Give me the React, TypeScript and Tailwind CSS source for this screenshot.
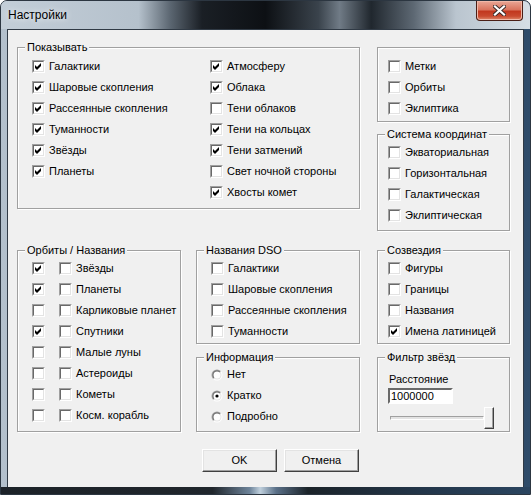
import type { ReactNode } from "react";

type Item = readonly [string, boolean];

const showLeft: Item[] = [
  ["Галактики", true],
  ["Шаровые скопления", true],
  ["Рассеянные скопления", true],
  ["Туманности", true],
  ["Звёзды", true],
  ["Планеты", true]
];

const showRight: Item[] = [
  ["Атмосферу", true],
  ["Облака", true],
  ["Тени облаков", false],
  ["Тени на кольцах", true],
  ["Тени затмений", true],
  ["Свет ночной стороны", false],
  ["Хвосты комет", true]
];

const orbits: Item[] = [
  ["Звёзды", true],
  ["Планеты", true],
  ["Карликовые планет", false],
  ["Спутники", true],
  ["Малые луны", false],
  ["Астероиды", false],
  ["Кометы", false],
  ["Косм. корабль", false]
];

function Box({ checked }: { checked: boolean }) {
  return (
    <span className="block h-[13px] w-[13px] shrink-0 border border-t-[#a0a0a0] border-l-[#a0a0a0] border-b-white border-r-white">
      <span className="block h-full w-full border border-t-[#696969] border-l-[#696969] border-b-[#e3e3e3] border-r-[#e3e3e3] bg-white">
        {checked && (
          <svg width="9" height="9" viewBox="0 0 9 9" className="block">
            <polygon points="1,3 3,5 7,1 7,4 3,8 1,6" fill="#000" />
          </svg>
        )}
      </span>
    </span>
  );
}

function Radio({ checked }: { checked: boolean }) {
  return (
    <svg width="12" height="12" viewBox="0 0 12 12" className="block shrink-0">
      <defs>
        <linearGradient id="ro" x1="0" y1="0" x2="1" y2="1">
          <stop offset="0.45" stopColor="#a0a0a0" />
          <stop offset="0.55" stopColor="#ffffff" />
        </linearGradient>
        <linearGradient id="ri" x1="0" y1="0" x2="1" y2="1">
          <stop offset="0.45" stopColor="#696969" />
          <stop offset="0.55" stopColor="#e3e3e3" />
        </linearGradient>
      </defs>
      <circle cx="6" cy="6" r="5.5" fill="url(#ro)" />
      <circle cx="6" cy="6" r="4.5" fill="url(#ri)" />
      <circle cx="6" cy="6" r="3.5" fill="#fff" />
      {checked && <circle cx="6" cy="6" r="1.6" fill="#000" />}
    </svg>
  );
}

function Check({ label, checked }: { label: string; checked: boolean }) {
  return (
    <div className="flex h-[21px] items-center gap-[4px] whitespace-nowrap">
      <Box checked={checked} />
      <span>{label}</span>
    </div>
  );
}

function Group({ title, className, children }: { title?: string; className: string; children: ReactNode }) {
  return (
    <div className={`relative shrink-0 border border-[#a0a0a0] shadow-[inset_1px_1px_0_#fff,1px_1px_0_#fff] ${className}`}>
      {title && (
        <span className="absolute -top-[7px] left-[7px] bg-[#f0f0f0] px-[2px] leading-[13px] whitespace-nowrap">{title}</span>
      )}
      {children}
    </div>
  );
}

function Button({ children }: { children: ReactNode }) {
  return (
    <button className="flex h-[23px] w-[75px] items-center justify-center border border-t-white border-l-white border-b-[#404040] border-r-[#404040] bg-[#f0f0f0] shadow-[inset_-1px_-1px_0_#a0a0a0,inset_1px_1px_0_#e3e3e3]">
      {children}
    </button>
  );
}

export default function App() {
  return (
    <div className="relative h-[495px] w-[531px] overflow-hidden rounded-t-[7px] border border-[#2c3641] bg-[linear-gradient(90deg,#b3c0cc_0%,#9fb0c0_30%,#2a3a4c_60%,#2f4c6a_100%)] font-['Liberation_Sans',Arial,sans-serif] text-[11px] text-black">
      <div className="flex h-[28px] items-start justify-between bg-[linear-gradient(90deg,#c3ced8_0%,#b5c1cc_26%,#5b6671_32%,#1a1f25_38%,#0d1014_50%,#3a434c_60%,#707b86_64%,#20272e_70%,#5d6873_78%,#bac5cf_86%,#d6dee5_100%)]">
        <span className="pl-[7px] pt-[6px] text-[12px] leading-[16px] [text-shadow:0_0_6px_#ffffff]">Настройки</span>
        <div className="mr-[7px] flex h-[20px] w-[47px] items-center justify-center rounded-b-[4px] border border-t-0 border-[#4a1e16] bg-[linear-gradient(180deg,#e9a796_0%,#d9755f_45%,#c2381f_55%,#c94a2f_80%,#e08a6c_100%)] shadow-[inset_0_0_0_1px_#f0b8a8]">
          <svg width="13" height="11" viewBox="0 0 13 11">
            <path d="M2 1.5 L11 9.5 M11 1.5 L2 9.5" stroke="#3a2a28" strokeWidth="4" strokeLinecap="square" />
            <path d="M2 1.5 L11 9.5 M11 1.5 L2 9.5" stroke="#ffffff" strokeWidth="2.2" strokeLinecap="square" />
          </svg>
        </div>
      </div>

      <div className="mx-[6px] h-[459px] border border-[#303a45] bg-[#f0f0f0] pl-[9px] pt-[17px]">
        <div className="flex">
          <Group title="Показывать" className="h-[162px] w-[343px] pl-[14px] pt-[8px]">
            <div className="flex">
              <div className="w-[178px]">
                {showLeft.map(([l, c]) => (
                  <Check key={l} label={l} checked={c} />
                ))}
              </div>
              <div>
                {showRight.map(([l, c]) => (
                  <Check key={l} label={l} checked={c} />
                ))}
              </div>
            </div>
          </Group>
          <div className="ml-[17px] flex flex-col">
            <Group className="h-[75px] w-[133px] pl-[10px] pt-[8px]">
              <Check label="Метки" checked={false} />
              <Check label="Орбиты" checked={false} />
              <Check label="Эклиптика" checked={false} />
            </Group>
            <Group title="Система координат" className="mt-[12px] h-[97px] w-[133px] pl-[10px] pt-[7px]">
              <Check label="Экваториальная" checked={false} />
              <Check label="Горизонтальная" checked={false} />
              <Check label="Галактическая" checked={false} />
              <Check label="Эклиптическая" checked={false} />
            </Group>
          </div>
        </div>

        <div className="mt-[19px] flex">
          <Group title="Орбиты / Названия" className="h-[182px] w-[164px] pl-[14px] pt-[7px]">
            {orbits.map(([l, c]) => (
              <div key={l} className="flex h-[21px] items-center whitespace-nowrap">
                <Box checked={c} />
                <span className="ml-[14px]">
                  <Box checked={false} />
                </span>
                <span className="ml-[4px]">{l}</span>
              </div>
            ))}
          </Group>
          <div className="ml-[15px] flex flex-col">
            <Group title="Названия DSO" className="h-[94px] w-[164px] pl-[14px] pt-[7px]">
              <Check label="Галактики" checked={false} />
              <Check label="Шаровые скопления" checked={false} />
              <Check label="Рассеянные скопления" checked={false} />
              <Check label="Туманности" checked={false} />
            </Group>
            <Group title="Информация" className="mt-[13px] h-[75px] w-[164px] pl-[14px] pt-[6px]">
              {[["Нет", false], ["Кратко", true], ["Подробно", false]].map(([l, c]) => (
                <div key={l as string} className="flex h-[21px] items-center gap-[4px]">
                  <Radio checked={c as boolean} />
                  <span>{l as string}</span>
                </div>
              ))}
            </Group>
          </div>
          <div className="ml-[17px] flex flex-col">
            <Group title="Созвездия" className="h-[94px] w-[133px] pl-[10px] pt-[7px]">
              <Check label="Фигуры" checked={false} />
              <Check label="Границы" checked={false} />
              <Check label="Названия" checked={false} />
              <Check label="Имена латиницей" checked={true} />
            </Group>
            <Group title="Фильтр звёзд" className="mt-[13px] h-[75px] w-[133px] pl-[11px] pt-[15px]">
              <div className="leading-[13px]">Расстояние</div>
              <div className="ml-[-1px] mt-[2px] flex h-[16px] w-[65px] items-center border-2 border-t-[#696969] border-l-[#696969] border-b-white border-r-white bg-white pl-[1px] leading-[12px]">
                1000000
              </div>
              <div className="mt-[3px] flex h-[22px] items-center pl-[1px]">
                <div className="h-[4px] w-[94px] border border-t-[#a0a0a0] border-l-[#a0a0a0] border-b-white border-r-white bg-[#e3e3e3]" />
                <div className="h-[22px] w-[10px] border border-t-white border-l-white border-b-[#404040] border-r-[#404040] bg-[#f0f0f0] shadow-[inset_-1px_-1px_0_#a0a0a0]" />
              </div>
            </Group>
          </div>
        </div>

        <div className="mt-[17px] flex gap-[7px] pl-[185px]">
          <Button>OK</Button>
          <Button>Отмена</Button>
        </div>
      </div>

      <div className="absolute bottom-0 left-0 h-[7px] w-full bg-[linear-gradient(90deg,#1c2228_0%,#20262c_40%,#6d8399_47%,#c0d0dd_49%,#5a7088_52%,#1b2329_58%,#23364a_80%,#2b4560_100%)]" />
    </div>
  );
}
